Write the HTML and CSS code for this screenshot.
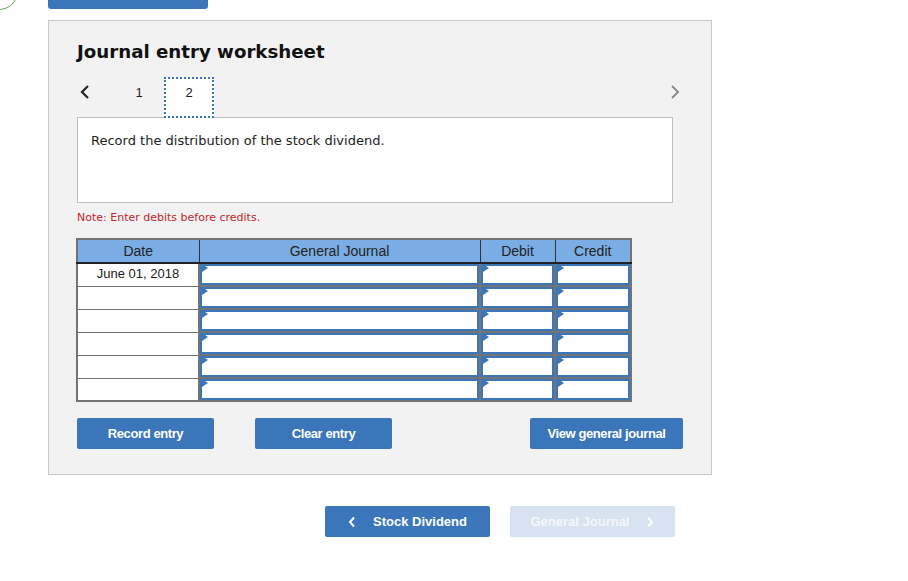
FILE: index.html
```html
<!DOCTYPE html>
<html>
<head>
<meta charset="utf-8">
<link rel="stylesheet" href="styles.css">
</head>
<body>
<div class="circle"></div>
<div class="page">
  <div class="topbar"></div>
  <div class="panel">
    <h1 class="title">Journal entry worksheet</h1>
    <div class="tabs">
      <span class="arrow prev"><svg width="12" height="16" viewBox="0 0 12 16"><path d="M9 2 L3 8 L9 14" fill="none" stroke="#222" stroke-width="2.2"/></svg></span>
      <span class="tab">1</span>
      <span class="tab active">2</span>
      <span class="spacer"></span>
      <span class="arrow next"><svg width="12" height="16" viewBox="0 0 12 16"><path d="M3 2 L9 8 L3 14" fill="none" stroke="#8c8c8c" stroke-width="2"/></svg></span>
    </div>
    <div class="question">Record the distribution of the stock dividend.</div>
    <p class="note">Note: Enter debits before credits.</p>
    <table class="journal">
      <colgroup><col class="c-date"><col class="c-gj"><col class="c-dr"><col class="c-cr"></colgroup>
      <thead>
        <tr><th>Date</th><th>General Journal</th><th>Debit</th><th>Credit</th></tr>
      </thead>
      <tbody>
        <tr><td class="date">June 01, 2018</td><td class="in"><div class="box"></div></td><td class="in"><div class="box"></div></td><td class="in"><div class="box"></div></td></tr>
        <tr><td class="date"></td><td class="in"><div class="box"></div></td><td class="in"><div class="box"></div></td><td class="in"><div class="box"></div></td></tr>
        <tr><td class="date"></td><td class="in"><div class="box"></div></td><td class="in"><div class="box"></div></td><td class="in"><div class="box"></div></td></tr>
        <tr><td class="date"></td><td class="in"><div class="box"></div></td><td class="in"><div class="box"></div></td><td class="in"><div class="box"></div></td></tr>
        <tr><td class="date"></td><td class="in"><div class="box"></div></td><td class="in"><div class="box"></div></td><td class="in"><div class="box"></div></td></tr>
        <tr><td class="date"></td><td class="in"><div class="box"></div></td><td class="in"><div class="box"></div></td><td class="in"><div class="box"></div></td></tr>
      </tbody>
    </table>
    <div class="actions">
      <button class="btn record">Record entry</button>
      <button class="btn clear">Clear entry</button>
      <span class="spacer"></span>
      <button class="btn view">View general journal</button>
    </div>
  </div>
  <div class="pager">
    <button class="nav back"><svg width="8" height="12" viewBox="0 0 8 12"><path d="M6 1.5 L2 6 L6 10.5" fill="none" stroke="#fff" stroke-width="2"/></svg><span>Stock Dividend</span></button>
    <button class="nav fwd"><span>General Journal</span><svg width="8" height="12" viewBox="0 0 8 12"><path d="M2 1.5 L6 6 L2 10.5" fill="none" stroke="#fff" stroke-width="2"/></svg></button>
  </div>
</div>
</body>
</html>
```
FILE: styles.css
```css
html, body {
  margin: 0;
  padding: 0;
  background: #fff;
}
body {
  font-family: "DejaVu Sans", Verdana, sans-serif;
  position: relative;
  width: 908px;
  height: 581px;
  overflow: hidden;
}
.circle {
  position: absolute;
  left: -20px;
  top: -28px;
  width: 36px;
  height: 36px;
  border: 1.5px solid #6a9a5a;
  border-radius: 50%;
}
.page {
  padding-left: 48px;
}
.topbar {
  width: 160px;
  height: 9px;
  background: #3a76b9;
  border-radius: 0 0 3px 3px;
}
.panel {
  margin-top: 11px;
  height: 453px;
  box-sizing: content-box;
  border: 1px solid #c8c8c8;
  background: #f2f2f2;
  display: flex;
  flex-direction: column;
  padding-left: 28px;
  width: 634px;
}
.title {
  margin: 20px 0 0 0;
  font-size: 18.2px;
  font-weight: bold;
  color: #111;
  line-height: 22px;
}
.tabs {
  display: flex;
  align-items: flex-start;
  margin-top: 14px;
  height: 41px;
  width: 596px;
  position: relative;
  z-index: 1;
}
.arrow {
  display: flex;
  align-items: center;
  margin-top: 7px;
}
.arrow.prev {
  width: 35px;
  padding-left: 2px;
}
.tab {
  width: 50px;
  height: 41px;
  box-sizing: border-box;
  display: flex;
  justify-content: center;
  padding-top: 8px;
  line-height: 15px;
  font-family: "Liberation Sans", Arial, sans-serif;
  font-size: 13px;
  color: #222;
}
.tab.active {
  background: #fff;
  border: 2px dotted #3a76b9;
  padding-top: 6px;
}
.spacer { flex: 1; }
.arrow.next {
  margin-right: -8px;
}
.question {
  width: 596px;
  height: 86px;
  box-sizing: border-box;
  margin-top: -1px;
  background: #fff;
  border: 1px solid #bdbdbd;
  padding: 15px 13px;
  font-size: 13px;
  color: #222;
}
.note {
  margin: 8px 0 0 0;
  font-size: 11px;
  color: #c4262e;
  line-height: 13px;
}
.journal {
  margin-top: 14px;
  margin-left: -1px;
  border-collapse: collapse;
  width: 555px;
  table-layout: fixed;
  font-family: "Liberation Sans", Arial, sans-serif;
  font-size: 13px;
  border: 2px solid #747474;
}
.c-date { width: 122px; }
.c-gj { width: 281px; }
.c-dr { width: 75px; }
.c-cr { width: 76px; }
.journal th {
  background: #7aade3;
  color: #222;
  font-weight: normal;
  font-size: 14px;
  height: 22px;
  padding: 0;
  border: 1px solid #333;
  border-bottom: 2px solid #222;
  border-top: 2px solid #747474;
  text-align: center;
}
.journal td {
  padding: 0;
  height: 21px;
  border: 1px solid #747474;
  border-top-width: 2px;
  background: #fff;
}
.journal td.date {
  text-align: center;
  color: #222;
  vertical-align: top;
  padding-top: 2px;
  height: 19px;
  border-top-width: 1px;
  border-left-width: 2px;
}
.journal td.in {
  position: relative;
  border-left-width: 2px;
  border-bottom-width: 0;
}
.journal td.in .box {
  height: 17px;
  border: 2px solid #3a76b9;
  position: relative;
}
.journal td.in .box::before {
  content: "";
  position: absolute;
  left: 0;
  top: -2px;
  width: 0;
  height: 0;
  border-top: 4px solid transparent;
  border-bottom: 4px solid transparent;
  border-left: 6px solid #3a76b9;
}
.actions {
  display: flex;
  width: 606px;
  margin-top: 16px;
}
.btn {
  height: 31px;
  background: #3a76b9;
  color: #fff;
  border: none;
  border-radius: 2px;
  font-family: "Liberation Sans Narrow", "Arial Narrow", "Liberation Sans", sans-serif;
  font-weight: bold;
  font-size: 13px;
  letter-spacing: -0.4px;
  padding: 0;
}
.btn.record { width: 137px; }
.btn.clear { width: 137px; margin-left: 41px; }
.btn.view { width: 153px; }
.pager {
  display: flex;
  margin-top: 31px;
  padding-left: 277px;
  gap: 20px;
}
.nav {
  width: 165px;
  height: 31px;
  border: none;
  border-radius: 2px;
  display: flex;
  align-items: center;
  justify-content: center;
  font-family: "Liberation Sans", Arial, sans-serif;
  font-weight: bold;
  font-size: 13px;
  color: #fff;
  padding: 0;
}
.nav.back {
  background: #3a76b9;
  gap: 17px;
}
.nav.fwd {
  background: #d7e3f0;
  color: #f4f7fb;
  gap: 17px;
}
```
